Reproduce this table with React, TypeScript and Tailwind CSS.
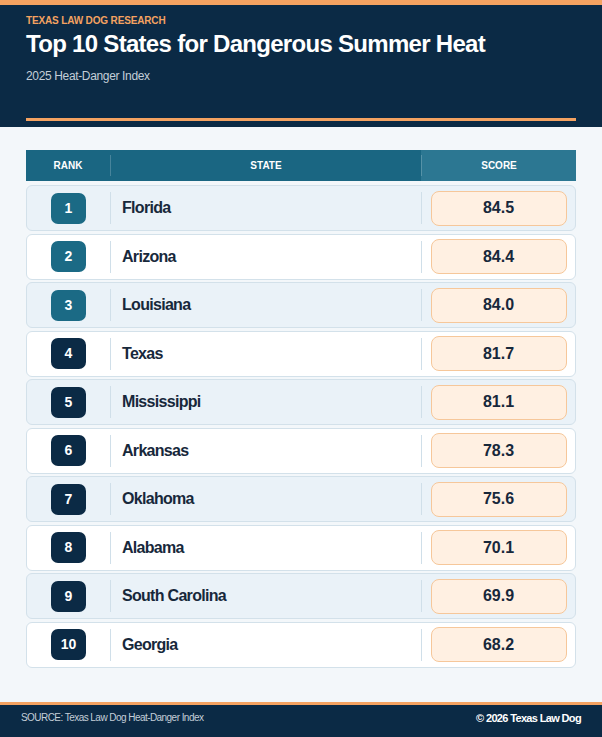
const rows = [
  { rank: 1, state: 'Florida', score: '84.5' },
  { rank: 2, state: 'Arizona', score: '84.4' },
  { rank: 3, state: 'Louisiana', score: '84.0' },
  { rank: 4, state: 'Texas', score: '81.7' },
  { rank: 5, state: 'Mississippi', score: '81.1' },
  { rank: 6, state: 'Arkansas', score: '78.3' },
  { rank: 7, state: 'Oklahoma', score: '75.6' },
  { rank: 8, state: 'Alabama', score: '70.1' },
  { rank: 9, state: 'South Carolina', score: '69.9' },
  { rank: 10, state: 'Georgia', score: '68.2' },
];

export default function App() {
  return (
    <div className="min-h-[737px] flex flex-col bg-[#f3f7fa] font-['Liberation_Sans',Arial,sans-serif]">
      {/* header */}
      <header className="border-t-[5px] border-[#f4a261] bg-[#0b2a45] px-[26px] pt-[10px] pb-[6px]">
        <p className="text-[10px] leading-[12px] font-bold tracking-[-0.15px] text-[#f4a261] uppercase">Texas Law Dog Research</p>
        <h1 className="mt-[3px] text-[24px] leading-[28px] font-bold tracking-[-0.7px] text-white">Top 10 States for Dangerous Summer Heat</h1>
        <p className="mt-[10px] text-[12px] leading-[16px] tracking-[-0.35px] text-[#c3ced8]">2025 Heat-Danger Index</p>
        <div className="mt-[34px] h-[3px] bg-[#f4a261]" />
      </header>

      {/* table */}
      <main className="flex-1 px-[26px] pt-[23px]">
        <div className="flex h-[31px] items-center bg-[#1a6682] text-[10px] font-bold text-white">
          <div className="w-[84px] text-center">RANK</div>
          <div className="h-[21px] w-px bg-white/20" />
          <div className="flex-1 text-center">STATE</div>
          <div className="flex h-full w-[155px] items-center bg-[#2c7792]">
            <div className="h-[21px] w-px bg-white/20" />
            <div className="flex-1 text-center">SCORE</div>
          </div>
        </div>

        <div className="mt-[4px] flex flex-col gap-[2.5px]">
          {rows.map(r => (
            <div
              key={r.rank}
              className={`flex h-[46px] items-center rounded-[6px] border border-[#d3e1ea] ${r.rank % 2 === 1 ? 'bg-[#eaf2f8]' : 'bg-white'}`}
            >
              <div className="flex w-[83px] justify-center">
                <div className={`flex h-[31px] w-[35px] items-center justify-center rounded-[7px] text-[14px] font-bold text-white ${r.rank <= 3 ? 'bg-[#1b6a85]' : 'bg-[#0b2a45]'}`}>
                  {r.rank}
                </div>
              </div>
              <div className="h-[32px] w-px bg-[#d0dfe9]" />
              <div className="flex-1 pl-[11px] text-[16px] font-bold tracking-[-0.7px] text-[#17283b]">{r.state}</div>
              <div className="h-[32px] w-px bg-[#d0dfe9]" />
              <div className="flex w-[153px] justify-center">
                <div className="flex h-[35px] w-[136px] items-center justify-center rounded-[8px] border border-[#f6c79a] bg-[#fff0e2] text-[16px] font-bold text-[#17283b]">
                  {r.score}
                </div>
              </div>
            </div>
          ))}
        </div>
      </main>

      {/* footer */}
      <footer className="mt-[34px] flex items-start justify-between border-t-[3px] border-[#f4a261] bg-[#0b2a45] px-[21px] pt-[6px] pb-[14px]">
        <span className="text-[10px] leading-[14px] tracking-[-0.55px] text-[#c3ced8]">SOURCE: Texas Law Dog Heat-Danger Index</span>
        <span className="text-[11px] leading-[14px] font-bold tracking-[-0.65px] text-white">© 2026 Texas Law Dog</span>
      </footer>
    </div>
  );
}
